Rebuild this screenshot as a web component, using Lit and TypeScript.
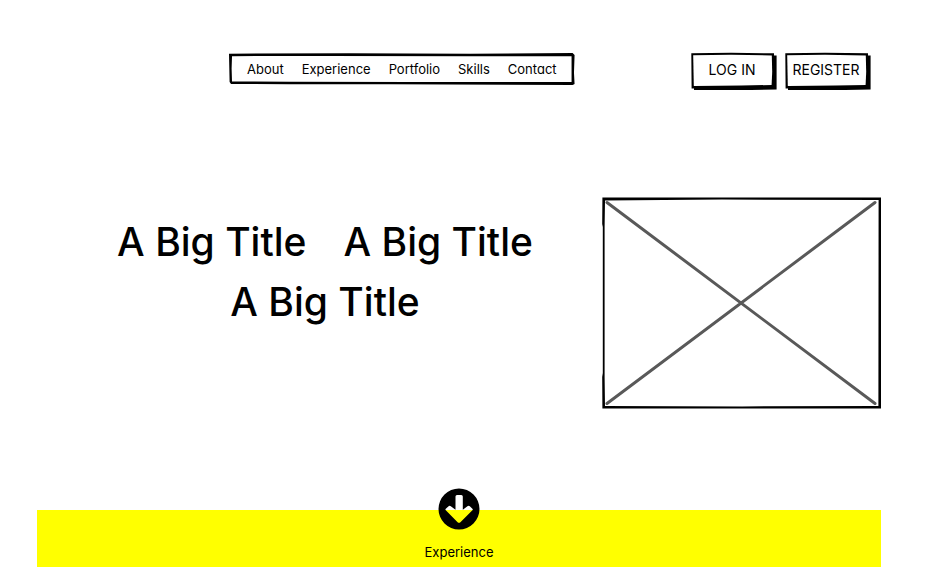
import { LitElement, html, css } from "lit";
import { customElement } from "lit/decorators.js";

const sections = ["About", "Experience", "Portfolio", "Skills", "Contact"];
const titles = ["A Big Title", "A Big Title", "A Big Title"];

@customElement("app-root")
export class AppRoot extends LitElement {
  static styles = css`
    :host {
      display: flex;
      flex-direction: column;
      box-sizing: border-box;
      min-height: 100vh;
      padding: 52px 64px 0 37px;
      background: #fff;
      color: #000;
      font: 400 13px/20px Inter, "Liberation Sans", sans-serif;
      font-feature-settings: "cv11";
    }
    .header {
      display: flex;
      justify-content: space-between;
      align-items: flex-start;
      padding: 0 10px 0 192px;
    }
    .nav,
    .button {
      position: relative;
    }
    .nav {
      display: flex;
      gap: 18px;
      padding: 7px 18px 6px;
    }
    .link {
      position: relative;
      color: inherit;
      text-decoration: none;
    }
    .sketch {
      position: absolute;
      inset: 0;
      width: 100%;
      height: 100%;
    }
    .actions {
      display: flex;
      gap: 8px;
    }
    .button {
      width: 86px;
      height: 39px;
      padding: 0 4px 3px 0;
      border: 0;
      background: none;
      color: inherit;
      font: inherit;
      font-size: 14px;
      cursor: pointer;
    }
    .label {
      position: relative;
    }
    .hero {
      display: grid;
      grid-template-columns: 1fr 280px;
      gap: 0 26px;
      margin-top: 106px;
    }
    .headline {
      display: flex;
      flex-wrap: wrap;
      justify-content: center;
      align-content: flex-start;
      gap: 0 37px;
      margin: 0;
      padding: 15px 32px 0 70px;
      font-size: 39px;
      font-weight: 500;
      line-height: 60px;
    }
    .picture {
      display: block;
      width: 100%;
      height: auto;
    }
    .band {
      flex: 1;
      display: flex;
      flex-direction: column;
      align-items: center;
      margin-top: 101px;
      background: #ff0;
    }
    .jump {
      display: flex;
      flex-direction: column;
      align-items: center;
      gap: 12px;
      margin-top: -22px;
      color: inherit;
      text-decoration: none;
    }
    .arrow {
      display: block;
      width: 42px;
      height: 42px;
    }
  `;

  private frame() {
    return html`<svg class="sketch" viewBox="0 0 344 32" preserveAspectRatio="none" aria-hidden="true">
      <path
        fill-rule="evenodd"
        d="M0 1.6 L120 1.2 L240 1.6 L342 1 L344 3 L343.4 20 L344 31 L342 32 L160 31.3 L60 31.3 L2 31 L0.6 29Z
           M3 4 L2.6 16 L3 28.6 L60 28.8 L180 29 L341 29 L341 4 L240 4 L100 3.8Z"
      />
    </svg>`;
  }

  private button(label: string) {
    return html`<button class="button" type="button">
      <svg class="sketch" viewBox="0 0 86 39" preserveAspectRatio="none" aria-hidden="true">
        <path d="M3 4 L85.6 3.5 L85.6 37.6 L60 38 L3 38Z" />
        <path d="M0.3 1.2 L40 0.7 L83 1.3 L83.2 18 L82.6 35.5 L40 36 L0.6 36.5Z" />
        <path fill="#fff" d="M2.2 3.2 L40 2.8 L80.8 3.4 L81.2 20 L80.6 33 L50 33.4 L2.8 34Z" />
      </svg>
      <span class="label">${label}</span>
    </button>`;
  }

  render() {
    return html`
      <header class="header">
        <nav class="nav">
          ${this.frame()}
          ${sections.map((s) => html`<a class="link" href="#${s.toLowerCase()}">${s}</a>`)}
        </nav>
        <div class="actions">${this.button("LOG IN")}${this.button("REGISTER")}</div>
      </header>
      <main class="hero">
        <h1 class="headline">${titles.map((t) => html`<span>${t}</span>`)}</h1>
        <svg class="picture" viewBox="-1 0 280 212" role="img" aria-label="Image placeholder">
          <path
            fill-rule="evenodd"
            d="M0.4 0.5 L279 0.5 L279 211.5 L0.4 211.5 L0.2 180 L0.8 176 L0.8 30 L0.2 27Z
               M3 3.4 L2.6 30 L2.6 180 L3 209 L140 209.4 L276.4 209 L276.6 3 L120 2.6Z"
          />
          <path d="M5 5.5 L273 206.5 M273 5.5 L5 206.5" stroke="#595959" stroke-width="3" stroke-linecap="round" />
        </svg>
      </main>
      <section class="band" id="experience">
        <a class="jump" href="#experience">
          <svg class="arrow" viewBox="0 0 42 42" aria-hidden="true">
            <path
              fill-rule="evenodd"
              d="M21 0.5 A20.5 20.5 0 1 1 21 41.5 A20.5 20.5 0 1 1 21 0.5Z
                 M19 7 Q17.5 7 17.5 8.5 V21.8 L12.8 18.2 Q11.5 17.4 10.3 18.5 L7.8 20.7 Q7 21.5 7.8 22.3 L19.6 34.2 Q21 35.5 22.4 34.2 L34.4 22.3 Q35.2 21.5 34.4 20.7 L31.8 18.3 Q30.6 17.4 29.4 18.3 L24.8 21.8 V8.5 Q24.8 7 23.3 7Z"
            />
          </svg>
          <span>Experience</span>
        </a>
      </section>
    `;
  }
}
